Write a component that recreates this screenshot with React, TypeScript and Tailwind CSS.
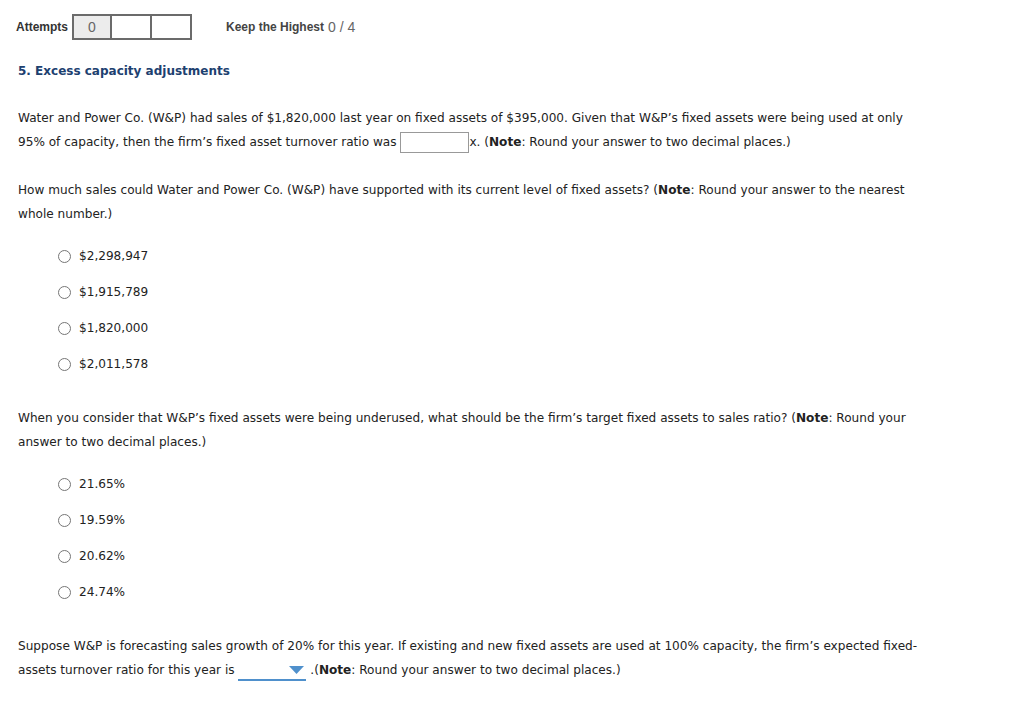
import React from 'react';

const body = { fontFamily: '"DejaVu Sans", Verdana, sans-serif' };

function Radio({ label }: { label: string }) {
  return (
    <label className="flex items-center h-[36px]">
      <span className="inline-block w-[13px] h-[13px] rounded-full border border-[#767676] bg-white" />
      <span className="ml-[8px]">{label}</span>
    </label>
  );
}

export default function App() {
  const q2 = ['$2,298,947', '$1,915,789', '$1,820,000', '$2,011,578'];
  const q3 = ['21.65%', '19.59%', '20.62%', '24.74%'];

  return (
    <div className="w-[1031px] h-[709px] bg-white text-[#222] overflow-hidden">
      {/* Attempts header */}
      <div className="flex items-center pl-[16px] pt-[14px]" style={{ fontFamily: '"Liberation Sans", Arial, sans-serif' }}>
        <span className="text-[12px] font-bold text-[#333] mr-[4px]">Attempts</span>
        <div className="flex">
          <div className="w-[40px] h-[26px] border-2 border-[#6b6b6b] bg-[#ececec] flex items-center justify-center text-[14px] text-[#666]">0</div>
          <div className="w-[40px] h-[26px] border-2 border-l-0 border-[#6b6b6b] bg-white" />
          <div className="w-[40px] h-[26px] border-2 border-l-0 border-[#6b6b6b] bg-white" />
        </div>
        <span className="ml-[34px] text-[12px] font-bold text-[#444]">Keep the Highest</span>
        <span className="ml-[4px] text-[14px] text-[#666]">0 / 4</span>
      </div>

      <div className="pl-[18px] text-[12.1px]" style={body}>
        <h2 className="mt-[22px] text-[12px] font-bold text-[#1d4170] leading-[18px]">5. Excess capacity adjustments</h2>

        <p className="mt-[26px] leading-[24px] w-[905px]">
          Water and Power Co. (W&amp;P) had sales of $1,820,000 last year on fixed assets of $395,000. Given that W&amp;P’s fixed assets were being used at only 95% of capacity, then the firm’s fixed asset turnover ratio was{' '}
          <span className="inline-block align-middle w-[69px] h-[21px] border border-[#999] bg-white" />
          x. (<b>Note</b>: Round your answer to two decimal places.)
        </p>

        <p className="mt-[24px] leading-[24px] w-[905px]">
          How much sales could Water and Power Co. (W&amp;P) have supported with its current level of fixed assets? (<b>Note</b>: Round your answer to the nearest whole number.)
        </p>

        <div className="mt-[12px] pl-[40px]">
          {q2.map((o) => (
            <Radio key={o} label={o} />
          ))}
        </div>

        <p className="mt-[24px] leading-[24px] w-[905px]">
          When you consider that W&amp;P’s fixed assets were being underused, what should be the firm’s target fixed assets to sales ratio? (<b>Note</b>: Round your answer to two decimal places.)
        </p>

        <div className="mt-[12px] pl-[40px]">
          {q3.map((o) => (
            <Radio key={o} label={o} />
          ))}
        </div>

        <p className="mt-[24px] leading-[24px] w-[910px]">
          Suppose W&amp;P is forecasting sales growth of 20% for this year. If existing and new fixed assets are used at 100% capacity, the firm’s expected fixed-assets turnover ratio for this year is{' '}
          <span className="inline-flex items-center justify-end align-middle w-[68px] h-[20px] border-b-2 border-[#4f90cc] pr-[2px]">
            <svg width="15" height="8" viewBox="0 0 15 8">
              <path d="M0 0 L15 0 L7.5 8 Z" fill="#4f90cc" />
            </svg>
          </span>{' '}
          .(<b>Note</b>: Round your answer to two decimal places.)
        </p>
      </div>
    </div>
  );
}
